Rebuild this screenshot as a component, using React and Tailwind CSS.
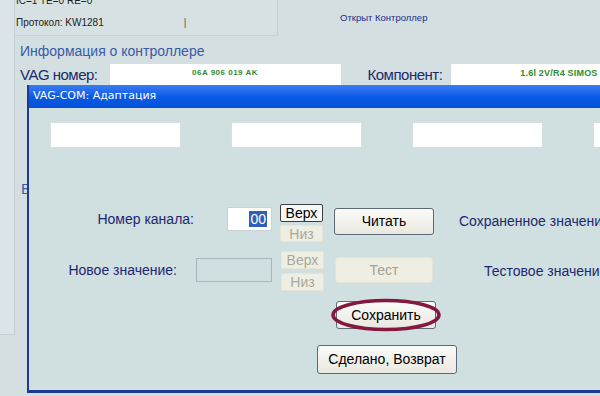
import React from 'react'

const sans = { fontFamily: '"Liberation Sans", Arial, sans-serif' }

function SpinBtn({ label, enabled, h = 'h-[18px]' }) {
  return (
    <div
      className={`${h} w-[43px] flex items-center justify-center text-[14px] leading-none rounded-[2px] border ${
        enabled ? 'bg-[#f7f7f4] border-[#3b3f44] text-black' : 'bg-[#efeee2] border-[#e6e5d8] text-[#a9a89c]'
      }`}
    >
      {label}
    </div>
  )
}

function Btn({ label, w, h, enabled = true, className = '' }) {
  return (
    <div
      className={`${w} ${h} shrink-0 flex items-center justify-center text-[14px] rounded-[3px] border ${
        enabled
          ? 'bg-gradient-to-b from-[#fbfbf9] to-[#e9e8e0] border-[#5d6a78] text-black'
          : 'bg-[#efeee2] border-[#e4e3d6] text-[#a3a297]'
      } ${className}`}
    >
      {label}
    </div>
  )
}

export default function App() {
  return (
    <div className="relative w-[600px] h-[396px] overflow-hidden bg-[#d4dfe1]" style={sans}>
      {/* background page */}
      <div className="flex h-full">
        <div className="w-[15px] h-[335px] bg-[#dbe5e7] border-r border-b border-[#c3cfd2] shrink-0" />
        <div className="flex-1 min-w-0 flex flex-col">
          <div className="flex">
            <div className="w-[263px] h-[36px] shrink-0 border-r border-b border-[#c5d1d3] bg-[#d6e1e3]">
              <div className="text-[10px] text-[#222] leading-none -mt-[4px] ml-[1px] whitespace-nowrap">IC=1 TE=0 RE=0</div>
              <div className="flex items-center mt-[12px] ml-[1px] text-[10px] leading-none text-[#222] whitespace-nowrap">
                <span>Протокол: KW1281</span>
                <span className="ml-[80px] text-[#555]">|</span>
              </div>
            </div>
            <div className="ml-[62px] mt-[13px] text-[9.5px] text-[#1c2d86] leading-none whitespace-nowrap">Открыт Контроллер</div>
          </div>
          <div className="ml-[5px] mt-[8px] text-[14px] leading-none text-[#3a5aa6] whitespace-nowrap">Информация о контроллере</div>
          <div className="flex mt-[6px]">
            <div className="ml-[5px] mt-[3px] text-[15px] tracking-[-0.5px] leading-none text-[#1b2a6b] whitespace-nowrap shrink-0">VAG номер:</div>
            <div className="ml-[12px] w-[231px] h-[22px] shrink-0 bg-white flex justify-center pt-[5px]">
              <span className="text-[8px] font-bold text-[#2f8a31] leading-none tracking-[0.5px] whitespace-nowrap">06A 906 019 AK</span>
            </div>
            <div className="ml-[27px] mt-[3px] text-[15px] tracking-[-0.5px] leading-none text-[#1b2a6b] whitespace-nowrap shrink-0">Компонент:</div>
            <div className="ml-[9px] flex-1 min-w-0 h-[22px] bg-white pt-[5px] pl-[69px] overflow-hidden whitespace-nowrap text-[9px] tracking-[0.2px] leading-none font-bold text-[#2f8a31]">
              1.6l 2V/R4 SIMOS H
            </div>
          </div>
          <div className="ml-[6px] mt-[95px] text-[15px] text-[#3a5aa6] leading-none">В</div>
        </div>
      </div>

      {/* dialog window */}
      <div className="absolute left-[27px] top-[85px] w-[600px] h-[308px] flex flex-col border-l-2 border-b-[3px] border-[#1d3a94] bg-[#d0dfe0]">
        <div className="h-[23px] bg-gradient-to-b from-[#3a7cf2] via-[#0a5be6] to-[#0550d8] flex items-center pl-[4px] shrink-0">
          <span className="text-white text-[11px]" style={{ fontFamily: '"DejaVu Sans", Verdana, sans-serif' }}>
            VAG-COM: Адаптация
          </span>
        </div>

        <div className="flex gap-[50px] pl-[21px] mt-[14px]">
          {[0, 1, 2, 3].map(i => (
            <div key={i} className="w-[131px] h-[26px] bg-white border border-[#d8dfe0] shrink-0" />
          ))}
        </div>

        {/* row 1 */}
        <div className="flex items-start mt-[56px]">
          <div className="w-[243px] shrink-0 flex justify-end items-center pt-[3px]">
            <span className="text-[14px] text-[#1d2770] mr-[33px] whitespace-nowrap">Номер канала:</span>
            <div className="w-[45px] h-[24px] bg-white border border-[#c9d2d4] flex items-center justify-end pr-[4px]">
              <span className="bg-[#2f5fb8] text-white text-[14px] leading-[16px] px-[1px]">00</span>
            </div>
          </div>
          <div className="ml-[8px] flex flex-col gap-[3px]">
            <SpinBtn label="Верх" enabled />
            <SpinBtn label="Низ" h="h-[17px]" />
          </div>
          <Btn label="Читать" w="w-[100px]" h="h-[27px]" className="ml-[11px] mt-[4px]" />
          <span className="ml-[25px] mt-[7px] text-[14px] text-[#1d2770] whitespace-nowrap">Сохраненное значение</span>
        </div>

        {/* row 2 */}
        <div className="flex items-start mt-[9px]">
          <div className="w-[243px] shrink-0 flex justify-end items-center pt-[7px]">
            <span className="text-[14px] text-[#1d2770] mr-[19px] whitespace-nowrap">Новое значение:</span>
            <div className="w-[76px] h-[24px] border border-[#a9b8bb] bg-[#d0dfe0]" />
          </div>
          <div className="ml-[9px] flex flex-col gap-[4px]">
            <SpinBtn label="Верх" />
            <SpinBtn label="Низ" />
          </div>
          <Btn label="Тест" w="w-[98px]" h="h-[26px]" enabled={false} className="ml-[11px] mt-[6px]" />
          <span className="ml-[51px] mt-[10px] text-[14px] text-[#1d2770] whitespace-nowrap">Тестовое значение</span>
        </div>

        {/* save */}
        <div className="pl-[307px] mt-[10px]">
          <div className="relative w-[100px]">
            <Btn label="Сохранить" w="w-[100px]" h="h-[28px]" />
            <svg className="absolute -left-[6px] -top-[4px]" width="112" height="36" viewBox="0 0 112 36">
              <ellipse cx="56" cy="18" rx="53" ry="14.5" fill="none" stroke="#84183f" strokeWidth="3.5" />
            </svg>
          </div>
        </div>

        {/* done */}
        <div className="pl-[288px] mt-[16px]">
          <Btn label="Сделано, Возврат" w="w-[140px]" h="h-[29px]" />
        </div>
      </div>
    </div>
  )
}
